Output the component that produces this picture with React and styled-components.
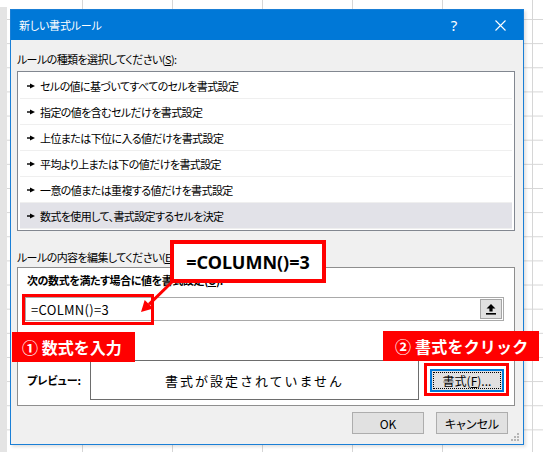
import React from "react";
import styled, { createGlobalStyle } from "styled-components";

const GlobalStyle = createGlobalStyle`
  html, body { margin: 0; padding: 0; background: #fff; }
  body { font-family: "Noto Sans CJK JP", "Noto Sans", sans-serif; color: #000; }
  * { box-sizing: border-box; }
`;

const Page = styled.div`
  position: relative;
  width: 543px;
  height: 452px;
  overflow: hidden;
  padding: 9px 0 0 10px;
  background-color: #fff;
  background-image:
    linear-gradient(to right, #e4e4e4 0 7px, transparent 7px),
    linear-gradient(to right, #d6d6d6 1px, transparent 1px),
    linear-gradient(to bottom, #d6d6d6 1px, transparent 1px);
  background-size: 100% 100%, 90px 100%, 100% 24.15px;
  background-position: 0 7px, 82px 0, 0 19px;
  background-repeat: no-repeat, repeat, repeat;
`;

const Dialog = styled.div`
  position: relative;
  width: 514px;
  height: 436px;
  border: 1px solid #1a7fd6;
  background: #f0f0f0;
  display: flex;
  flex-direction: column;
  box-shadow: 2px 2px 3px rgba(0, 0, 0, 0.12);
`;

const TitleBar = styled.div`
  height: 30px;
  background: #0078d7;
  color: #fff;
  display: flex;
  align-items: center;
  padding-left: 8px;
  font-size: 11px;
  flex-shrink: 0;
`;

const TitleText = styled.div`
  flex: 1;
  font-feature-settings: "palt";
  letter-spacing: -0.2px;
`;

const TitleButton = styled.div`
  width: 46px;
  height: 30px;
  display: flex;
  align-items: center;
  justify-content: center;
  font-family: "Noto Sans", sans-serif;
  font-size: 15px;
`;

const Body = styled.div`
  flex: 1;
  display: flex;
  flex-direction: column;
  padding: 0 8px 0 6px;
`;

const SectionLabel = styled.div`
  font-size: 11px;
  line-height: 16px;
  margin-top: ${(p) => p.$mt}px;
  font-feature-settings: "palt";
  letter-spacing: -0.6px;
`;

const U = styled.span`
  text-decoration: underline;
`;

const ListBox = styled.div`
  margin-top: 4px;
  height: 160px;
  border: 1px solid #828790;
  background: #fff;
  padding: 1px 2px;
`;

const ListRow = styled.div`
  height: 26px;
  display: flex;
  align-items: center;
  gap: 5px;
  padding-left: 7px;
  font-size: 11px;
  font-feature-settings: "palt";
  letter-spacing: -0.6px;
  border-bottom: 1px solid #efefef;
  background: ${(p) => (p.$selected ? "#e2e2e8" : "transparent")};
`;

const GroupBox = styled.div`
  margin-top: 2px;
  height: 139px;
  border: 1px solid #8e8e8e;
  background: #fff;
  padding: 4px 10px 5px 7px;
  display: flex;
  flex-direction: column;
`;

const BoldLabel = styled.div`
  font-size: 11px;
  line-height: 16px;
  font-weight: 700;
  margin-left: 2px;
  font-feature-settings: "palt";
  letter-spacing: -0.4px;
`;

const InputBox = styled.div`
  margin-top: 9px;
  height: 24px;
  border: 1px solid #a9a9a9;
  display: flex;
  align-items: center;
`;

const InputText = styled.div`
  flex: 1;
  padding-left: 5px;
  font-size: 13px;
  letter-spacing: 0.3px;
`;

const CollapseButton = styled.div`
  width: 22px;
  height: 20px;
  margin-right: 1px;
  background: #e1e1e1;
  border: 1px solid #a5a5a5;
  display: flex;
  align-items: center;
  justify-content: center;
`;

const PreviewRow = styled.div`
  margin-top: 39px;
  height: 40px;
  display: flex;
  align-items: center;
`;

const PreviewLabel = styled.div`
  width: 63px;
  margin-left: 2px;
  font-size: 11px;
  font-weight: 700;
  font-feature-settings: "palt";
`;

const PreviewBox = styled.div`
  width: 329px;
  height: 40px;
  border: 1px solid #6d6d6d;
  display: flex;
  align-items: center;
  justify-content: center;
  font-size: 13px;
  letter-spacing: 2px;
`;

const FormatButton = styled.div`
  margin-left: 11px;
  width: 74px;
  height: 23px;
  border: 2px solid #0078d7;
  background: #e1e1e1;
  padding: 1px;
  display: flex;
`;

const FocusRect = styled.div`
  flex: 1;
  border: 1px dotted #000;
  display: flex;
  align-items: center;
  justify-content: center;
  font-size: 12px;
  font-feature-settings: "palt";
`;

const Footer = styled.div`
  margin-top: 6px;
  padding-right: 7px;
  display: flex;
  justify-content: flex-end;
  gap: 12px;
`;

const DialogButton = styled.div`
  width: 72px;
  height: 22px;
  border: 1px solid #adadad;
  background: #e1e1e1;
  display: flex;
  align-items: center;
  justify-content: center;
  font-size: 12px;
  font-feature-settings: "palt";
`;

const Grip = styled.svg`
  position: absolute;
  right: 3px;
  bottom: 2px;
`;

const Callout = styled.div`
  position: absolute;
  left: 170px;
  top: 240px;
  width: 156px;
  height: 43px;
  border: 4px solid #ff0000;
  background: #fff;
  display: flex;
  align-items: center;
  justify-content: center;
  font-family: "Noto Sans", sans-serif;
  font-weight: 700;
  font-size: 18px;
`;

const Highlight = styled.div`
  position: absolute;
  left: ${(p) => p.$x}px;
  top: ${(p) => p.$y}px;
  width: ${(p) => p.$w}px;
  height: ${(p) => p.$h}px;
  border: 3px solid #ff0000;
`;

const StepLabel = styled.div`
  position: absolute;
  left: ${(p) => p.$x}px;
  top: ${(p) => p.$y}px;
  width: ${(p) => p.$w}px;
  height: 30px;
  background: #ff0000;
  color: #fff;
  font-weight: 700;
  font-size: 16px;
  letter-spacing: ${(p) => p.$ls}px;
  display: flex;
  align-items: center;
  padding-left: ${(p) => p.$pl}px;
`;

const Overlay = styled.svg`
  position: absolute;
  left: 0;
  top: 0;
  pointer-events: none;
`;

const Bullet = () => (
  <svg width="8" height="6" viewBox="0 0 8 6">
    <rect x="0" y="2.3" width="4" height="1.4" fill="#000" />
    <polygon points="3,0.5 8,3 3,5.5" fill="#000" />
  </svg>
);

const rules = [
  "セルの値に基づいてすべてのセルを書式設定",
  "指定の値を含むセルだけを書式設定",
  "上位または下位に入る値だけを書式設定",
  "平均より上または下の値だけを書式設定",
  "一意の値または重複する値だけを書式設定",
  "数式を使用して、書式設定するセルを決定",
];

export default function App() {
  return (
    <>
      <GlobalStyle />
      <Page>
        <Dialog>
          <TitleBar>
            <TitleText>新しい書式ルール</TitleText>
            <TitleButton>?</TitleButton>
            <TitleButton>
              <svg width="11" height="11" viewBox="0 0 11 11">
                <path d="M0.5 0.5 L10.5 10.5 M10.5 0.5 L0.5 10.5" stroke="#fff" strokeWidth="1.1" />
              </svg>
            </TitleButton>
          </TitleBar>
          <Body>
            <SectionLabel $mt={11}>
              ルールの種類を選択してください(<U>S</U>):
            </SectionLabel>
            <ListBox>
              {rules.map((r, i) => (
                <ListRow key={r} $selected={i === rules.length - 1}>
                  <Bullet />
                  <span>{r}</span>
                </ListRow>
              ))}
            </ListBox>
            <SectionLabel $mt={18}>
              ルールの内容を編集してください(<U>E</U>):
            </SectionLabel>
            <GroupBox>
              <BoldLabel>
                次の数式を満たす場合に値を書式設定(<U>O</U>):
              </BoldLabel>
              <InputBox>
                <InputText>=COLMN()=3</InputText>
                <CollapseButton>
                  <svg width="10" height="11" viewBox="0 0 10 11">
                    <polygon points="5,0 9.5,4.5 6.6,4.5 6.6,7.6 3.4,7.6 3.4,4.5 0.5,4.5" fill="#000" />
                    <rect x="0" y="9" width="10" height="1.6" fill="#000" />
                  </svg>
                </CollapseButton>
              </InputBox>
              <PreviewRow>
                <PreviewLabel>プレビュー:</PreviewLabel>
                <PreviewBox>書式が設定されていません</PreviewBox>
                <FormatButton>
                  <FocusRect>
                    書式(<U>F</U>)...
                  </FocusRect>
                </FormatButton>
              </PreviewRow>
            </GroupBox>
            <Footer>
              <DialogButton>OK</DialogButton>
              <DialogButton>キャンセル</DialogButton>
            </Footer>
          </Body>
          <Grip width="9" height="9" viewBox="0 0 9 9">
            {[
              [6, 0],
              [3, 3],
              [6, 3],
              [0, 6],
              [3, 6],
              [6, 6],
            ].map(([x, y]) => (
              <rect key={`${x}-${y}`} x={x} y={y} width="2" height="2" fill="#b5b5b5" />
            ))}
          </Grip>
        </Dialog>

        <Highlight $x={22} $y={294} $w={132} $h={31} />
        <Highlight $x={424} $y={363} $w={85} $h={33} />
        <Overlay width="543" height="452" viewBox="0 0 543 452">
          <line x1="172" y1="282" x2="149" y2="304.3" stroke="#ff0000" strokeWidth="3" />
          <polygon points="141,312 153.3,308.6 144.7,300" fill="#ff0000" />
        </Overlay>
        <Callout>=COLUMN()=3</Callout>
        <StepLabel $x={12} $y={332} $w={123} $pl={10} $ls={0}>
          ① 数式を入力
        </StepLabel>
        <StepLabel $x={383} $y={331} $w={156} $pl={12} $ls={0.2}>
          ② 書式をクリック
        </StepLabel>
      </Page>
    </>
  );
}
